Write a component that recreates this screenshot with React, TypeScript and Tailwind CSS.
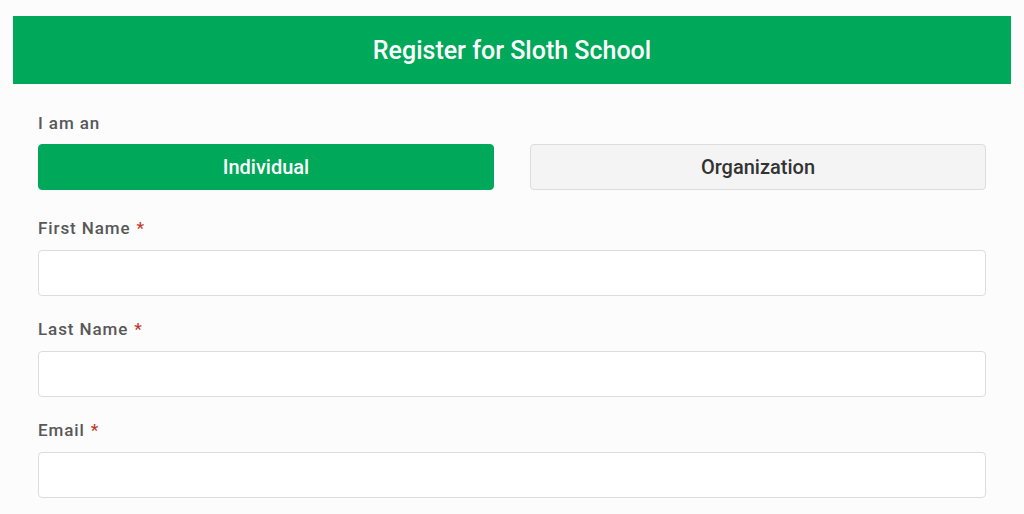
import React from 'react';

function Field({ label, first }: { label: string; first?: boolean }) {
  return (
    <div className={first ? 'mt-[27px]' : 'mt-[22px]'}>
      <div className="flex items-center h-[24px] mb-[9px] text-[17px] font-medium tracking-[0.9px] text-[#585858]">
        {label}
        <span className="ml-[6px] text-[#c0392b]">*</span>
      </div>
      <input
        type="text"
        className="block w-full h-[46px] rounded-[4px] border border-[#dcdcdc] bg-white px-3 outline-none"
      />
    </div>
  );
}

export default function App() {
  const [kind, setKind] = React.useState<'individual' | 'organization'>('individual');

  const active = 'flex-1 h-[46px] rounded-[4px] border border-[#00a859] bg-[#00a859] text-white text-[20px] font-medium';
  const idle = 'flex-1 h-[46px] rounded-[4px] border border-[#dcdcdc] bg-[#f4f4f4] text-[#333] text-[20px] font-medium';

  return (
    <div
      className="min-h-screen bg-[#fcfcfc] px-[13px] pt-[16px]"
      style={{ fontFamily: 'Roboto, "Liberation Sans", sans-serif' }}
    >
      {/* Header */}
      <div className="h-[68px] bg-[#00a859] flex items-center justify-center pt-[2px] text-white text-[25px] font-medium">
        Register for Sloth School
      </div>

      <div className="px-[25px] pt-[28px]">
        <div className="h-[24px] flex items-center mb-[8px] text-[17px] font-medium tracking-[0.9px] text-[#585858]">
          I am an
        </div>
        <div className="flex gap-[36px]">
          <button onClick={() => setKind('individual')} className={kind === 'individual' ? active : idle}>
            Individual
          </button>
          <button onClick={() => setKind('organization')} className={kind === 'organization' ? active : idle}>
            Organization
          </button>
        </div>

        <Field label="First Name" first />
        <Field label="Last Name" />
        <Field label="Email" />
      </div>
    </div>
  );
}
